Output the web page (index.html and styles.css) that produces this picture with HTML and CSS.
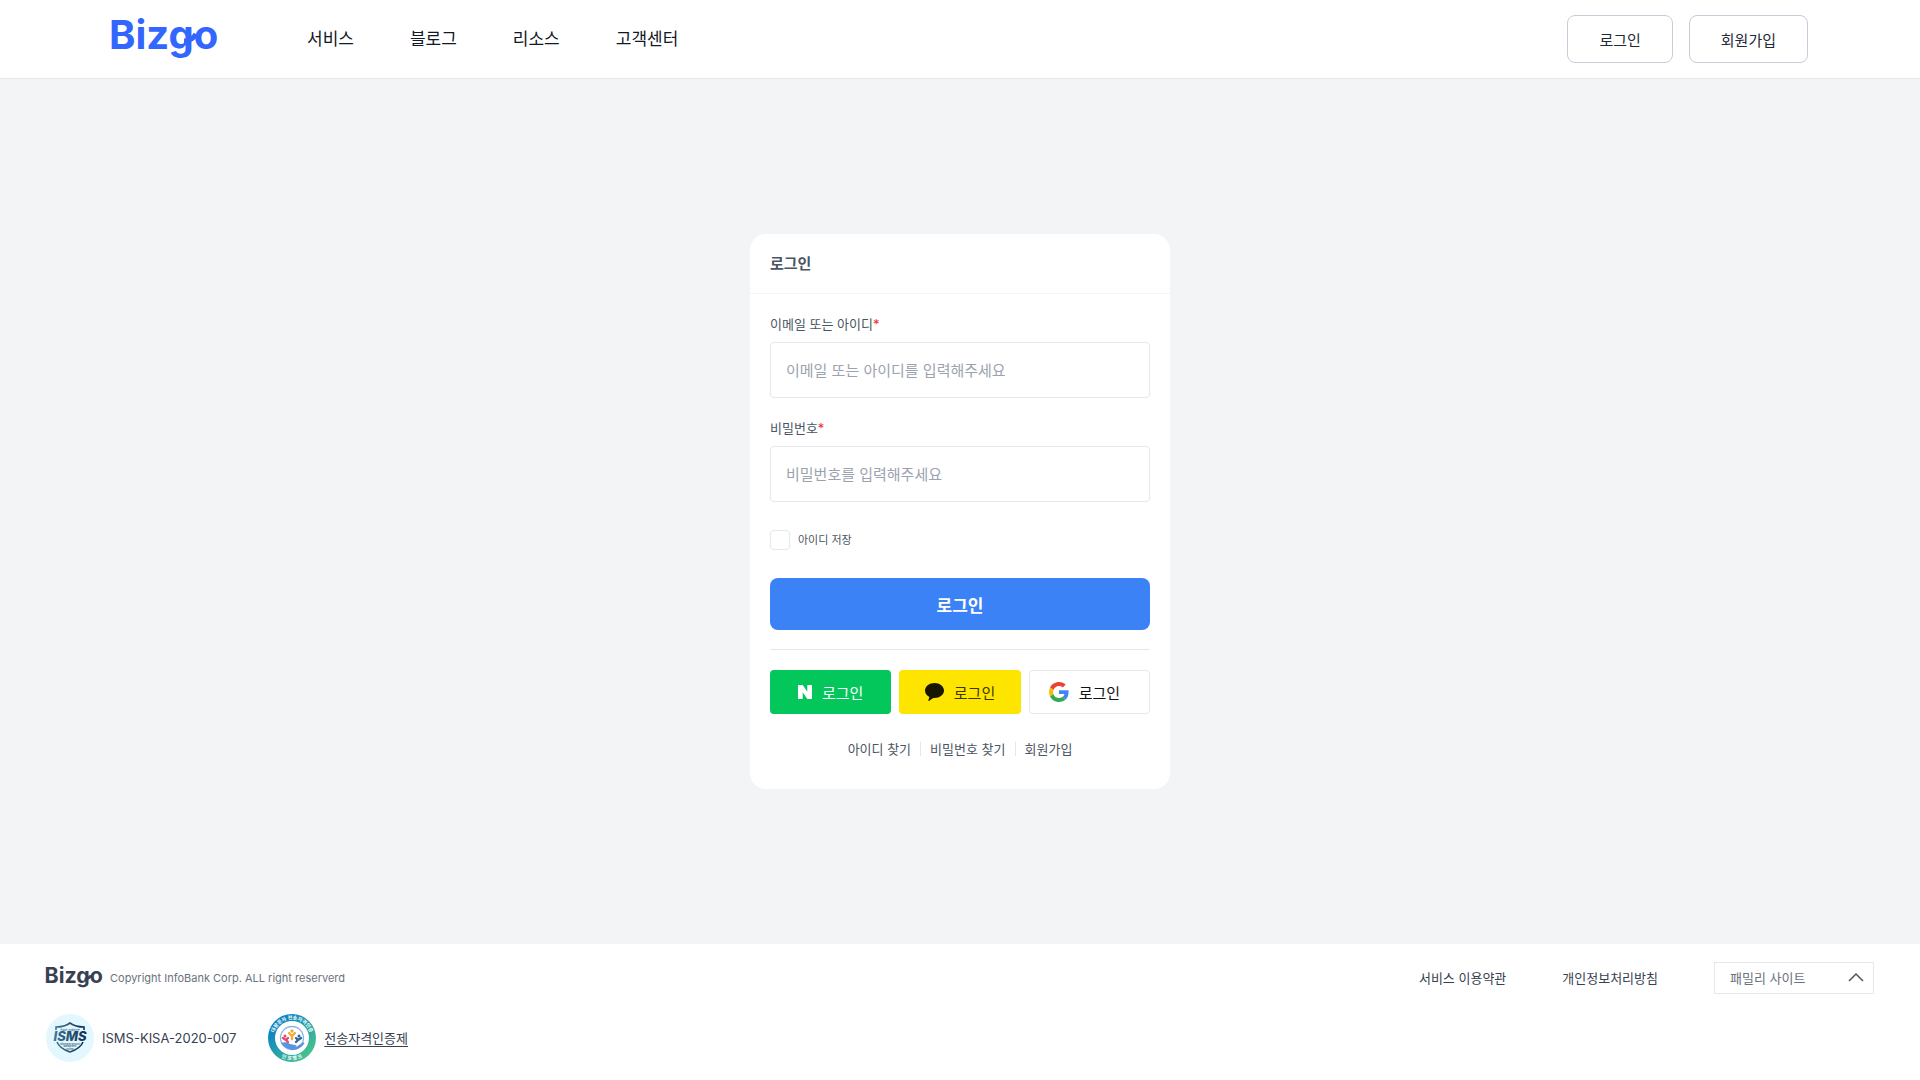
FILE: index.html
```
<!DOCTYPE html>
<html lang="ko">
<head>
  <meta charset="UTF-8">
  <meta name="viewport" content="width=device-width, initial-scale=1.0">
  <title>Bizgo 로그인</title>
  <link rel="stylesheet" href="styles.css">
</head>
<body>
  <header class="header">
    <a href="#" class="logo" aria-label="Bizgo">
      <svg width="116" height="60" viewBox="0 0 116 60">
        <text class="logo-text" x="1" y="40">Bizgo</text>
        <path d="M76 32q8 0 12-7" fill="none" stroke="currentColor" stroke-width="5"/>
      </svg>
    </a>
    <nav class="nav">
      <a href="#">서비스</a>
      <a href="#">블로그</a>
      <a href="#">리소스</a>
      <a href="#">고객센터</a>
    </nav>
    <div class="header-buttons">
      <button type="button" class="outline-button">로그인</button>
      <button type="button" class="outline-button">회원가입</button>
    </div>
  </header>

  <main class="main">
    <section class="card">
      <h1 class="card-title">로그인</h1>
      <form class="card-body">
        <div class="field">
          <label for="userId">이메일 또는 아이디<span class="required">*</span></label>
          <input type="text" id="userId" placeholder="이메일 또는 아이디를 입력해주세요">
        </div>
        <div class="field">
          <label for="password">비밀번호<span class="required">*</span></label>
          <input type="password" id="password" placeholder="비밀번호를 입력해주세요">
        </div>
        <div class="remember">
          <input type="checkbox" id="saveId">
          <label for="saveId">아이디 저장</label>
        </div>
        <button type="submit" class="submit-button">로그인</button>

        <div class="social">
          <button type="button" class="social-button naver">
            <svg width="14" height="14" viewBox="0 0 14 14"><path fill="#fff" d="M0 0h4.7l4.6 6.8V0H14v14H9.3L4.7 7.2V14H0z"/></svg>
            로그인
          </button>
          <button type="button" class="social-button kakao">
            <svg width="19" height="18" viewBox="0 0 19 18"><path fill="#191600" d="M9.5 0C4.3 0 0 3.4 0 7.6c0 2.7 1.7 5 4.4 6.3L3.3 17.6c-.1.3.2.5.5.3l4.5-2.9c.4.1.8.1 1.200.1 5.200 0 9.500-3.300 9.500-7.500S14.700 0 9.500 0z"/></svg>
            로그인
          </button>
          <button type="button" class="social-button google">
            <svg width="20" height="20" viewBox="0 0 48 48">
              <path fill="#EA4335" d="M24 9.5c3.54 0 6.71 1.22 9.21 3.6l6.85-6.85C35.9 2.38 30.47 0 24 0 14.62 0 6.51 5.38 2.56 13.22l7.98 6.19C12.43 13.72 17.74 9.5 24 9.5z"/>
              <path fill="#4285F4" d="M46.98 24.55c0-1.57-.15-3.09-.38-4.55H24v9.02h12.94c-.58 2.96-2.26 5.48-4.78 7.18l7.73 6c4.51-4.18 7.09-10.36 7.09-17.65z"/>
              <path fill="#FBBC05" d="M10.53 28.59c-.48-1.45-.76-2.99-.76-4.59s.27-3.14.76-4.59l-7.98-6.19C.92 16.46 0 20.12 0 24c0 3.88.92 7.54 2.56 10.78l7.97-6.19z"/>
              <path fill="#34A853" d="M24 48c6.48 0 11.93-2.13 15.89-5.81l-7.73-6c-2.15 1.45-4.92 2.3-8.16 2.3-6.26 0-11.57-4.22-13.47-9.91l-7.98 6.19C6.51 42.62 14.62 48 24 48z"/>
            </svg>
            로그인
          </button>
        </div>

        <div class="links">
          <a href="#">아이디 찾기</a>
          <a href="#">비밀번호 찾기</a>
          <a href="#">회원가입</a>
        </div>
      </form>
    </section>
  </main>

  <footer class="footer">
    <div class="footer-row">
      <svg class="footer-logo" width="62" height="32" viewBox="0 0 116 60" role="img" aria-label="Bizgo">
        <text class="logo-text" x="1" y="40">Bizgo</text>
        <path d="M76 32q8 0 12-7" fill="none" stroke="currentColor" stroke-width="5"/>
      </svg>
      <p class="copyright">Copyright InfoBank Corp. ALL right reserverd</p>
      <div class="policy">
        <a href="#">서비스 이용약관</a>
        <a href="#">개인정보처리방침</a>
        <div class="family">
          <select aria-label="패밀리 사이트">
            <option>패밀리 사이트</option>
          </select>
          <svg width="16" height="10" viewBox="0 0 16 10"><path d="M1 9l7-7 7 7" fill="none" stroke="#4b5563" stroke-width="1.5"/></svg>
        </div>
      </div>
    </div>
    <div class="footer-row certs">
      <div class="cert">
        <svg width="48" height="48" viewBox="0 0 48 48">
          <defs>
            <linearGradient id="shield" x1="0" x2="1">
              <stop offset="0" stop-color="#3b7796"/>
              <stop offset="1" stop-color="#112e52"/>
            </linearGradient>
          </defs>
          <circle cx="24" cy="24" r="24" fill="#e3f7ff"/>
          <path d="M10 16v-3c6 0 10-1 14-4 4 3 8 4 14 4v3M11 28c2 5 7 8 13 10 6-2 11-5 13-10" fill="none" stroke="url(#shield)" stroke-width="1.6"/>
          <text class="isms-small" x="24" y="16.5">정보보호 관리체계 인증</text>
          <text class="isms" x="24" y="27" fill="url(#shield)">ISMS</text>
          <text class="isms-small" x="24" y="30.5">Information Security</text>
          <text class="isms-small" x="24" y="33">Management</text>
          <text class="isms-small" x="24" y="35.5">System</text>
        </svg>
        <span>ISMS-KISA-2020-007</span>
      </div>
      <div class="cert">
        <svg width="48" height="48" viewBox="0 0 48 48">
          <defs>
            <linearGradient id="ring" x1="0" y1="0" x2="1" y2="1">
              <stop offset="0.2" stop-color="#0d83c4"/>
              <stop offset="0.9" stop-color="#4bc78b"/>
            </linearGradient>
            <path id="arcTop" d="M5.500 24a18.500 18.500 0 0 1 37 0"/>
            <path id="arcBottom" d="M2 24a22 22 0 0 0 44 0"/>
          </defs>
          <circle cx="24" cy="24" r="24" fill="url(#ring)"/>
          <circle cx="24" cy="24" r="17" fill="#fff"/>
          <text class="ring-text"><textPath href="#arcTop" startOffset="50%">대량문자 전송자격인증</textPath></text>
          <text class="ring-text"><textPath href="#arcBottom" startOffset="50%">인 포 뱅 크</textPath></text>
          <circle cx="24" cy="24" r="11.5" fill="none" stroke="#83b7e8" stroke-width="1.3"/>
          <path d="M13 29c4-1 6-1 9 1l5 1c2 0 2 2 0 2h-4 5l6-4c2-1 3 0 2 1-3 4-7 6-12 6-5-1-8-3-11-7z" fill="#5596df"/>
          <g fill="none" stroke-linecap="round" stroke-width="2.4">
            <path d="M21 19l3 3 3-3M24 22v3" stroke="#f3ac3a"/>
            <path d="M15 24l3 2 2-2M18 26l2 2" stroke="#e34b6b"/>
            <path d="M33 24l-3 2-2-2M30 26l-2 2" stroke="#31659e"/>
          </g>
          <circle cx="24" cy="17" r="1.7" fill="#f3ac3a"/>
          <circle cx="17" cy="22" r="1.5" fill="#e34b6b"/>
          <circle cx="31" cy="22" r="1.5" fill="#31659e"/>
        </svg>
        <a href="#">전송자격인증제</a>
      </div>
    </div>
  </footer>
</body>
</html>
```
FILE: styles.css
```
* {
  box-sizing: border-box;
}

body {
  display: flex;
  flex-direction: column;
  min-height: 100vh;
  margin: 0;
  background-color: #f3f4f6;
  color: #374151;
  font-family: Inter, "Noto Sans CJK KR", sans-serif;
  font-size: 13px;
  line-height: 20px;
}

a {
  color: inherit;
  text-decoration: none;
}

button,
input,
select {
  font-family: inherit;
}

button {
  cursor: pointer;
}

svg {
  display: block;
  flex-shrink: 0;
}

/* header */
.header {
  display: flex;
  align-items: center;
  padding: 9px 112px 9px 108px;
  background-color: #fff;
  border-bottom: 1px solid #e5e7eb;
}

.logo {
  margin-right: 83px;
  color: #3366ff;
}

.logo-text {
  font-size: 40px;
  font-weight: 700;
  fill: currentColor;
}

.nav {
  display: flex;
  gap: 56px;
  color: #111827;
  font-size: 17px;
  line-height: 26px;
}

.header-buttons {
  display: flex;
  gap: 16px;
  margin-left: auto;
}

.outline-button {
  height: 48px;
  padding: 0 31px;
  background-color: #fff;
  border: 1px solid #c8ccd8;
  border-radius: 8px;
  color: #1f2937;
  font-size: 15px;
}

/* login card */
.main {
  display: flex;
  flex: 1;
  justify-content: center;
  align-items: center;
}

.card {
  width: 420px;
  background-color: #fff;
  border-radius: 16px;
}

.card-title {
  margin: 0;
  padding: 20px 20px 19px;
  border-bottom: 1px solid #f3f4f6;
  color: #4b5563;
  font-size: 15px;
  font-weight: 700;
  line-height: 20px;
}

.card-body {
  padding: 20px 20px 33px;
}

.field {
  margin-bottom: 20px;
}

.field label {
  display: block;
  margin-bottom: 8px;
  color: #4b5563;
}

.required {
  color: #ef2b2b;
}

.field input {
  display: block;
  width: 100%;
  height: 56px;
  padding: 0 15px;
  border: 1px solid #e5e7eb;
  border-radius: 4px;
  color: #374151;
  font-size: 15px;
}

.field input::placeholder {
  color: #9ca3af;
}

.remember {
  display: flex;
  align-items: center;
  gap: 8px;
  margin: 28px 0;
  color: #4b5563;
  font-size: 11px;
}

.remember input {
  appearance: none;
  width: 20px;
  height: 20px;
  margin: 0;
  background-color: #fff;
  border: 1px solid #e5e7eb;
  border-radius: 4px;
}

.remember input:checked {
  background-color: #3b82f6;
}

.submit-button {
  width: 100%;
  height: 52px;
  background-color: #3b82f6;
  border: none;
  border-radius: 8px;
  color: #fff;
  font-size: 17px;
  font-weight: 700;
}

.social {
  display: grid;
  grid-template-columns: repeat(3, 1fr);
  gap: 8px;
  margin-top: 19px;
  padding-top: 20px;
  border-top: 1px solid #e5e7eb;
}

.social-button {
  display: flex;
  justify-content: center;
  align-items: center;
  gap: 10px;
  height: 44px;
  padding: 0;
  border: none;
  border-radius: 4px;
  font-size: 15px;
}

.naver {
  background-color: #03c75a;
  color: #fff;
}

.kakao {
  background-color: #fee500;
  color: #3c3600;
}

.google {
  padding-right: 10px;
  background-color: #fff;
  border: 1px solid #e5e7eb;
  color: #111;
}

.links {
  display: flex;
  justify-content: center;
  align-items: center;
  margin-top: 28px;
  color: #4b5563;
}

.links a {
  padding: 0 9px;
  line-height: 14px;
}

.links a + a {
  border-left: 1px solid #e5e7eb;
}

/* footer */
.footer {
  display: flex;
  flex-direction: column;
  gap: 20px;
  padding: 18px 46px;
  background-color: #fff;
}

.footer-row {
  display: flex;
  align-items: center;
}

.footer-logo {
  margin-left: -2px;
  color: #374151;
}

.copyright {
  margin: 0 0 0 4px;
  color: #6b7280;
  font-size: 11px;
}

.policy {
  display: flex;
  align-items: center;
  gap: 56px;
  margin-left: auto;
}

.family {
  position: relative;
}

.family select {
  display: block;
  appearance: none;
  width: 160px;
  height: 32px;
  padding: 0 15px;
  background-color: #fff;
  border: 1px solid #e5e7eb;
  border-radius: 0;
  color: #6b7280;
  font-size: 13px;
}

.family svg {
  position: absolute;
  top: 10px;
  right: 10px;
  pointer-events: none;
}

.certs {
  gap: 32px;
}

.cert {
  display: flex;
  align-items: center;
  gap: 8px;
}

.cert a {
  text-decoration: underline;
  text-underline-offset: 3px;
}

.isms {
  font-size: 13px;
  font-style: italic;
  font-weight: 800;
  text-anchor: middle;
}

.isms-small {
  font-size: 2px;
  font-weight: 700;
  fill: #44647c;
  text-anchor: middle;
}

.ring-text {
  font-size: 5px;
  font-weight: 700;
  fill: #fff;
  text-anchor: middle;
}
```
